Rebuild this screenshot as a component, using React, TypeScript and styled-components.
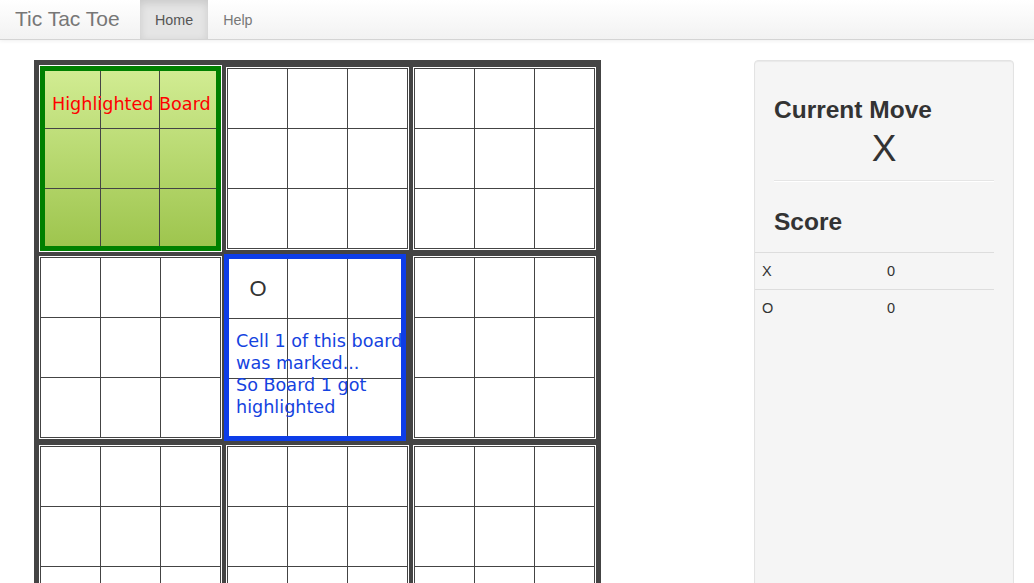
import React from "react";
import styled, { createGlobalStyle, css } from "styled-components";

type Variant = "plain" | "highlighted" | "marked";

const GlobalStyle = createGlobalStyle`
  * {
    box-sizing: border-box;
  }
  body {
    margin: 0;
    font-family: "Liberation Sans", Arial, sans-serif;
    font-size: 14px;
    line-height: 20px;
    color: #333;
    background: #fff;
  }
`;

const NavBar = styled.div`
  display: flex;
  height: 40px;
  background: linear-gradient(#ffffff, #f2f2f2);
  border-bottom: 1px solid #d4d4d4;
  box-shadow: 0 1px 4px rgba(0, 0, 0, 0.065);
`;

const Brand = styled.a`
  display: block;
  width: 140px;
  padding: 9px 0 10px 15px;
  font-size: 21px;
  line-height: 20px;
  color: #777;
  text-decoration: none;
  white-space: nowrap;
`;

const NavList = styled.ul`
  display: flex;
  margin: 0;
  padding: 0;
  list-style: none;
`;

const NavItem = styled.li<{ $active?: boolean }>`
  padding: 10px 15px 9px;
  line-height: 20px;
  font-size: 14.3px;
  color: ${(p) => (p.$active ? "#555" : "#777")};
  ${(p) =>
    p.$active &&
    css`
      background: #e5e5e5;
      box-shadow: inset 0 3px 8px rgba(0, 0, 0, 0.125);
    `}
`;

const Main = styled.div`
  display: flex;
  justify-content: space-between;
  align-items: stretch;
  padding: 20px 20px 0 34px;
`;

const BigBoard = styled.div`
  display: grid;
  grid-template-columns: repeat(3, 183px);
  grid-auto-rows: 183px;
  column-gap: 4px;
  row-gap: 6px;
  padding: 7px 5px 5px 5px;
  width: 567px;
  background: #444;
`;

const Frame = styled.div<{ $variant: Variant }>`
  position: relative;
  align-self: start;
  ${(p) =>
    p.$variant === "plain" &&
    css`
      width: 183px;
      height: 183px;
      border: 1px solid #fff;
      background: #fff;
    `}
  ${(p) =>
    p.$variant === "highlighted" &&
    css`
      width: 181px;
      height: 185px;
      margin: -1px 1px;
      border: 5px solid #008000;
      box-shadow: 0 0 0 1px #fff;
      background: linear-gradient(#d1ec92, #9ec54e);
    `}
  ${(p) =>
    p.$variant === "marked" &&
    css`
      width: 182px;
      height: 187px;
      margin: -2px 0 -2px -2px;
      border: 5px solid #0d3de8;
      background: #fff;
    `}
`;

const cellTracks: Record<Variant, ReturnType<typeof css>> = {
  plain: css`
    grid-template-columns: 60px 60px 59px;
    grid-template-rows: 60px 60px 59px;
    border: 1px solid #444;
  `,
  highlighted: css`
    grid-template-columns: 56px 59px 1fr;
    grid-template-rows: 58px 60px 1fr;
  `,
  marked: css`
    grid-template-columns: 59px 60px 1fr;
    grid-template-rows: 60px 60px 1fr;
  `,
};

const Cells = styled.div<{ $variant: Variant }>`
  display: grid;
  height: 100%;
  ${(p) => cellTracks[p.$variant]}
`;

const Cell = styled.div`
  display: flex;
  align-items: center;
  justify-content: center;
  border-right: 1px solid #444;
  border-bottom: 1px solid #444;
  font-size: 22px;
  color: #333;

  &:nth-child(3n) {
    border-right: none;
  }
  &:nth-child(n + 7) {
    border-bottom: none;
  }
`;

const Note = styled.div<{ $color: string; $top: number }>`
  position: absolute;
  left: 7px;
  top: ${(p) => p.$top}px;
  font-family: "DejaVu Sans", sans-serif;
  font-size: 17.6px;
  line-height: 22px;
  white-space: nowrap;
  color: ${(p) => p.$color};
  pointer-events: none;
`;

const Well = styled.div`
  width: 260px;
  padding: 19px;
  background: #f5f5f5;
  border: 1px solid #e3e3e3;
  border-radius: 4px;
  box-shadow: inset 0 1px 1px rgba(0, 0, 0, 0.05);
`;

const Heading = styled.h3<{ $gap: number }>`
  margin: ${(p) => p.$gap}px 0 0;
  font-size: 24.5px;
  line-height: 40px;
  font-weight: bold;
  color: #333;
`;

const MoveMark = styled.div`
  font-size: 37px;
  line-height: 38px;
  text-align: center;
  color: #333;
`;

const Rule = styled.hr`
  margin: 12px 0 0;
  border: 0;
  border-top: 1px solid #e5e5e5;
  border-bottom: 1px solid #fff;
`;

const ScoreTable = styled.div`
  margin: 10px 0 0 -19px;
`;

const ScoreRow = styled.div`
  display: grid;
  grid-template-columns: 125px 1fr;
  border-top: 1px solid #ddd;
`;

const ScoreCell = styled.div`
  padding: 8px 8px 8px 7px;
  font-size: 14.5px;
  line-height: 20px;
`;

const boards: { variant: Variant; marks: string[] }[] = [
  { variant: "highlighted", marks: [] },
  { variant: "plain", marks: [] },
  { variant: "plain", marks: [] },
  { variant: "plain", marks: [] },
  { variant: "marked", marks: ["O"] },
  { variant: "plain", marks: [] },
  { variant: "plain", marks: [] },
  { variant: "plain", marks: [] },
  { variant: "plain", marks: [] },
];

const scores = [
  { player: "X", points: 0 },
  { player: "O", points: 0 },
];

const App = () => {
  return (
    <>
      <GlobalStyle />
      <NavBar>
        <Brand href="#">Tic Tac Toe</Brand>
        <NavList>
          <NavItem $active>Home</NavItem>
          <NavItem>Help</NavItem>
        </NavList>
      </NavBar>
      <Main>
        <BigBoard>
          {boards.map((board, i) => (
            <Frame key={i} $variant={board.variant}>
              <Cells $variant={board.variant}>
                {Array.from({ length: 9 }).map((_, c) => (
                  <Cell key={c}>{board.marks[c] || ""}</Cell>
                ))}
              </Cells>
              {board.variant === "highlighted" && (
                <Note $color="#ff0000" $top={22}>
                  Highlighted Board
                </Note>
              )}
              {board.variant === "marked" && (
                <Note $color="#1443e0" $top={71}>
                  Cell 1 of this board
                  <br />
                  was marked...
                  <br />
                  So Board 1 got
                  <br />
                  highlighted
                </Note>
              )}
            </Frame>
          ))}
        </BigBoard>
        <Well>
          <Heading $gap={10}>Current Move</Heading>
          <MoveMark>X</MoveMark>
          <Rule />
          <Heading $gap={20}>Score</Heading>
          <ScoreTable>
            {scores.map((s) => (
              <ScoreRow key={s.player}>
                <ScoreCell>{s.player}</ScoreCell>
                <ScoreCell>{s.points}</ScoreCell>
              </ScoreRow>
            ))}
          </ScoreTable>
        </Well>
      </Main>
    </>
  );
};

export default App;
